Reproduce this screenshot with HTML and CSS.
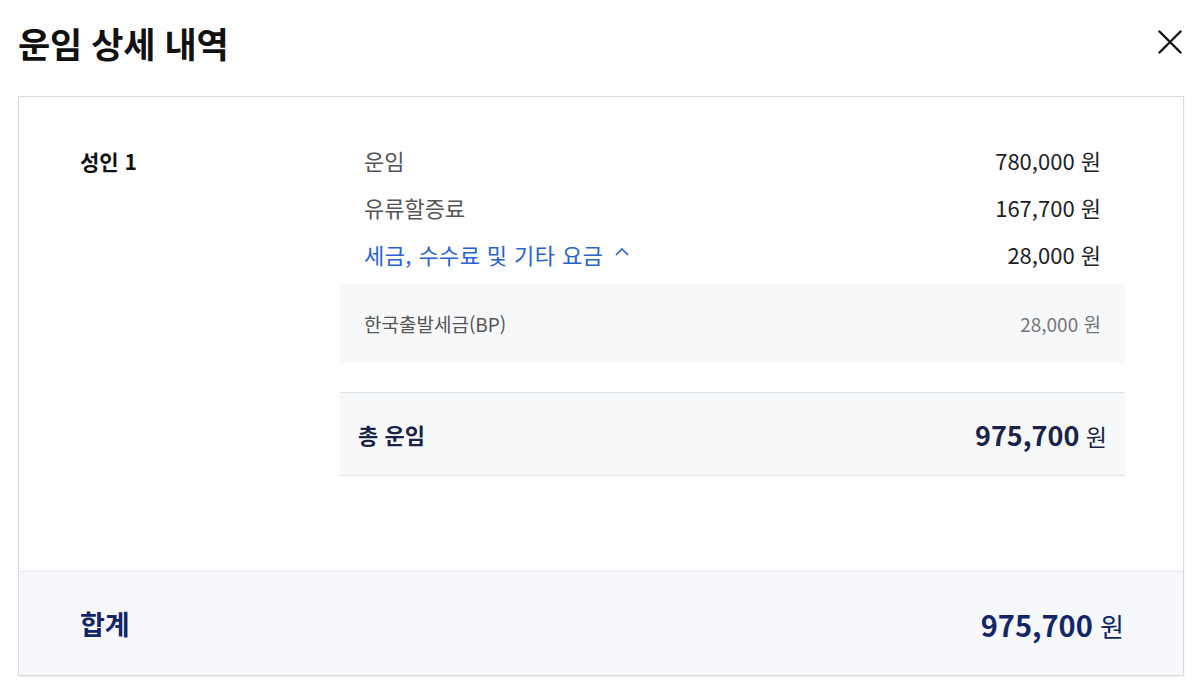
FILE: index.html
```html
<!DOCTYPE html>
<html lang="ko">
<head>
<meta charset="utf-8">
<title>운임 상세 내역</title>
<link rel="stylesheet" href="styles.css">
</head>
<body>
<div class="modal">
  <header class="modal-header">
    <h1 class="title">운임 상세 내역</h1>
    <button class="close" aria-label="닫기">
      <svg width="24" height="24" viewBox="0 0 24 24"><path d="M1.5 1.5 L22.5 22.5 M22.5 1.5 L1.5 22.5" stroke="#111" stroke-width="2.4" fill="none" stroke-linecap="round"/></svg>
    </button>
  </header>
  <section class="card">
    <div class="card-body">
      <div class="pax">성인 1</div>
      <div class="details">
        <div class="row"><span>운임</span><span class="amt">780,000 원</span></div>
        <div class="row"><span>유류할증료</span><span class="amt">167,700 원</span></div>
        <div class="row"><span class="link">세금, 수수료 및 기타 요금 <svg class="caret" width="14" height="9" viewBox="0 0 14 9"><path d="M1 8 L7 2 L13 8" stroke="#2a62d6" stroke-width="1.6" fill="none"/></svg></span><span class="amt">28,000 원</span></div>
        <div class="sub"><span>한국출발세금(BP)</span><span class="sub-amt">28,000 원</span></div>
        <div class="total"><span class="total-label">총 운임</span><span class="total-amt"><b>975,700</b> 원</span></div>
      </div>
    </div>
    <div class="card-foot">
      <span class="sum-label">합계</span>
      <span class="sum-amt"><b>975,700</b> 원</span>
    </div>
  </section>
</div>
</body>
</html>
```

FILE: styles.css
```css
* { box-sizing: border-box; }
html, body { margin: 0; padding: 0; background: #fff; }
body {
  font-family: "Noto Sans CJK KR", "Noto Sans", "Liberation Sans", sans-serif;
  color: #222;
  width: 1200px;
  height: 690px;
  overflow: hidden;
}
.modal { padding: 0 18px 0 18px; }
.modal-header {
  height: 96px;
  display: flex;
  align-items: center;
  justify-content: space-between;
  padding-bottom: 12px;
}
.title {
  margin: 0;
  font-size: 35px;
  font-weight: 700;
  color: #111;
  letter-spacing: -0.3px;
}
.close {
  background: none;
  border: 0;
  padding: 0;
  margin-right: 0;
  width: 24px;
  height: 24px;
  display: flex;
}
.card {
  width: 1166px;
  border: 1px solid #dcdcdc;
  box-shadow: 0 1px 2px rgba(0,0,0,0.08);
}
.card-body {
  display: flex;
  padding: 39px 58px 95px 0;
}
.pax {
  width: 321px;
  padding-left: 61px;
  padding-top: 12px;
  font-size: 21px;
  font-weight: 700;
  color: #111;
  line-height: 26px;
}
.details { flex: 1; }
.row {
  height: 47px;
  display: flex;
  align-items: center;
  justify-content: space-between;
  padding: 0 24px;
  font-size: 22px;
  color: #555;
}
.amt { color: #222; }
.link { color: #2a62d6; display: flex; align-items: center; letter-spacing: 0.4px; }
.caret { margin-left: 12px; margin-top: -4px; }
.sub {
  margin-top: 7px;
  height: 79px;
  background: #f6f8fa;
  display: flex;
  align-items: center;
  justify-content: space-between;
  padding: 0 24px;
  font-size: 19px;
  color: #555;
}
.sub-amt { color: #777; }
.total {
  margin-top: 29px;
  height: 84px;
  border-top: 1px solid #dfe3e8;
  border-bottom: 1px solid #dfe3e8;
  background: #f6f8fa;
  display: flex;
  align-items: center;
  justify-content: space-between;
  padding: 0 18px;
}
.total-label { font-size: 22px; font-weight: 700; color: #1a2448; }
.total-amt { font-size: 23px; color: #1a2448; }
.total-amt b { font-size: 27px; }
.card-foot {
  height: 104px;
  border-top: 1px solid #e2e5ea;
  background: #f6f8fb;
  display: flex;
  align-items: center;
  justify-content: space-between;
  padding: 0 59px 0 61px;
}
.sum-label { font-size: 27px; font-weight: 700; color: #122668; }
.sum-amt { font-size: 26px; color: #122668; }
.sum-amt b { font-size: 29px; }
```
